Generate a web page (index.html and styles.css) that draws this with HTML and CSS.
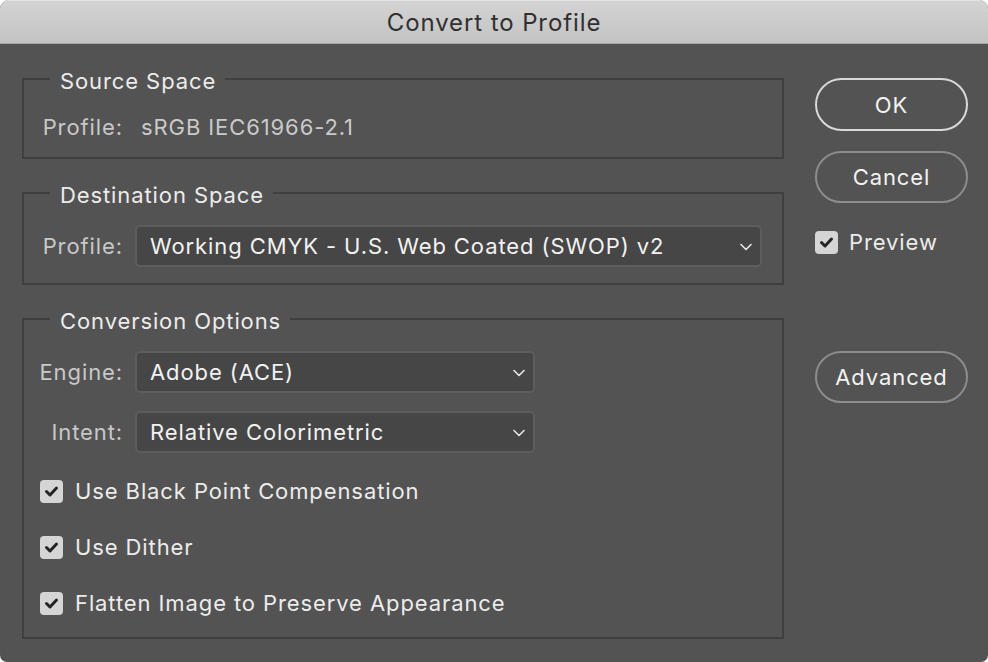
FILE: index.html
```html
<!DOCTYPE html>
<html>
<head>
<meta charset="utf-8">
<title>Convert to Profile</title>
<link rel="stylesheet" href="styles.css">
</head>
<body>
<div class="window">
  <header class="titlebar">Convert to Profile</header>
  <div class="content">
    <div class="main">
      <section class="group">
        <div class="group-head"><span class="legend">Source Space</span></div>
        <div class="group-body g1">
          <div class="row">
            <span class="label">Profile:</span>
            <span class="value">sRGB IEC61966-2.1</span>
          </div>
        </div>
      </section>

      <section class="group">
        <div class="group-head"><span class="legend">Destination Space</span></div>
        <div class="group-body g2">
          <div class="row">
            <span class="label">Profile:</span>
            <div class="select wide">
              <span>Working CMYK - U.S. Web Coated (SWOP) v2</span>
              <svg class="chev" width="12" height="8" viewBox="0 0 12 8"><path d="M1 1.5 L6 6.5 L11 1.5" fill="none" stroke="#e6e6e6" stroke-width="1.6" stroke-linecap="round" stroke-linejoin="round"/></svg>
            </div>
          </div>
        </div>
      </section>

      <section class="group">
        <div class="group-head"><span class="legend">Conversion Options</span></div>
        <div class="group-body g3">
          <div class="row">
            <span class="label">Engine:</span>
            <div class="select short">
              <span>Adobe (ACE)</span>
              <svg class="chev" width="12" height="8" viewBox="0 0 12 8"><path d="M1 1.5 L6 6.5 L11 1.5" fill="none" stroke="#e6e6e6" stroke-width="1.6" stroke-linecap="round" stroke-linejoin="round"/></svg>
            </div>
          </div>
          <div class="row intent">
            <span class="label">Intent:</span>
            <div class="select short">
              <span>Relative Colorimetric</span>
              <svg class="chev" width="12" height="8" viewBox="0 0 12 8"><path d="M1 1.5 L6 6.5 L11 1.5" fill="none" stroke="#e6e6e6" stroke-width="1.6" stroke-linecap="round" stroke-linejoin="round"/></svg>
            </div>
          </div>
          <div class="checks">
            <label class="check">
              <svg class="box" width="23" height="23" viewBox="0 0 23 23"><rect x="0" y="0" width="23" height="23" rx="4" fill="#d5d5d5"/><path d="M6.5 11.5 L10 15 L16.5 8" fill="none" stroke="#262626" stroke-width="3" stroke-linecap="round" stroke-linejoin="round"/></svg>
              <span>Use Black Point Compensation</span>
            </label>
            <label class="check">
              <svg class="box" width="23" height="23" viewBox="0 0 23 23"><rect x="0" y="0" width="23" height="23" rx="4" fill="#d5d5d5"/><path d="M6.5 11.5 L10 15 L16.5 8" fill="none" stroke="#262626" stroke-width="3" stroke-linecap="round" stroke-linejoin="round"/></svg>
              <span>Use Dither</span>
            </label>
            <label class="check">
              <svg class="box" width="23" height="23" viewBox="0 0 23 23"><rect x="0" y="0" width="23" height="23" rx="4" fill="#d5d5d5"/><path d="M6.5 11.5 L10 15 L16.5 8" fill="none" stroke="#262626" stroke-width="3" stroke-linecap="round" stroke-linejoin="round"/></svg>
              <span>Flatten Image to Preserve Appearance</span>
            </label>
          </div>
        </div>
      </section>
    </div>

    <aside class="side">
      <button class="btn default">OK</button>
      <button class="btn cancel">Cancel</button>
      <label class="check preview">
        <svg class="box" width="23" height="23" viewBox="0 0 23 23"><rect x="0" y="0" width="23" height="23" rx="4" fill="#d5d5d5"/><path d="M6.5 11.5 L10 15 L16.5 8" fill="none" stroke="#262626" stroke-width="3" stroke-linecap="round" stroke-linejoin="round"/></svg>
        <span>Preview</span>
      </label>
      <button class="btn advanced">Advanced</button>
    </aside>
  </div>
</div>
</body>
</html>
```

FILE: styles.css
```css
* { box-sizing: border-box; }

html, body {
  margin: 0;
  padding: 0;
  background: #ffffff;
}

body {
  font-family: Inter, "Noto Sans", "Liberation Sans", sans-serif;
  font-size: 22px;
  letter-spacing: 0.9px;
  color: #e8e8e8;
  width: 988px;
  height: 662px;
  overflow: hidden;
}

.window {
  width: 988px;
  height: 662px;
  background: #535353;
  border-radius: 9px 9px 7px 7px;
  overflow: hidden;
  display: flex;
  flex-direction: column;
}

.titlebar {
  height: 44px;
  flex: 0 0 44px;
  background: linear-gradient(#d4d4d4, #c3c3c3);
  border-bottom: 1px solid #a6a6a6;
  box-shadow: inset 0 1px 0 #e4e4e4;
  color: #303030;
  font-size: 24px;
  letter-spacing: 0.9px;
  line-height: 46px;
  text-align: center;
}

.content {
  display: flex;
  flex: 1;
  padding: 25px 0 0 22px;
}

.main {
  width: 762px;
  display: flex;
  flex-direction: column;
  gap: 24px;
}

.group-head {
  display: flex;
  height: 22px;
  align-items: center;
}

.group-head::before,
.group-head::after {
  content: "";
  height: 11px;
  align-self: flex-end;
  border-top: 2px solid #3f3f3f;
}

.group-head::before {
  flex: 0 0 26px;
  border-left: 2px solid #3f3f3f;
}

.group-head::after {
  flex: 1;
  border-right: 2px solid #3f3f3f;
}

.legend {
  padding: 0 9px 0 10px;
  color: #ececec;
  line-height: 22px;
  position: relative;
  top: 1px;
}

.group-body {
  border: 2px solid #3f3f3f;
  border-top: none;
}

.g1 { padding: 22px 20px 16px 0; }
.g2 { padding: 20px 20px 16px 0; }
.g3 { padding: 20px 20px 20px 0; }

.row {
  display: flex;
  align-items: center;
  min-height: 28px;
}

.intent { margin-top: 18px; }

.label {
  width: 99px;
  text-align: right;
  color: #c8c8c8;
  line-height: 28px;
  white-space: nowrap;
}

.value {
  margin-left: 18px;
  color: #cacaca;
  line-height: 28px;
}

.select {
  margin-left: 12px;
  height: 42px;
  background: #464646;
  border: 2px solid #5d5d5d;
  border-radius: 5px;
  display: flex;
  align-items: center;
  justify-content: space-between;
  padding: 0 8px 0 13px;
  color: #f2f2f2;
  white-space: nowrap;
}

.wide { width: 627px; }
.short { width: 400px; }

.chev { display: block; margin-top: 1px; }

.checks {
  margin-top: 24px;
  padding-left: 16px;
  display: flex;
  flex-direction: column;
  gap: 28px;
}

.check {
  display: flex;
  align-items: center;
  gap: 12px;
  height: 28px;
  color: #ececec;
  white-space: nowrap;
}

.box { display: block; flex: 0 0 23px; }

.side {
  margin-left: 31px;
  width: 153px;
  padding-top: 9px;
  display: flex;
  flex-direction: column;
}

.btn {
  font-family: inherit;
  font-size: 22px;
  letter-spacing: 0.9px;
  color: #f2f2f2;
  background: transparent;
  border: 2px solid #8c8c8c;
  border-radius: 27px;
  width: 153px;
  height: 52px;
  padding: 0;
}

.default {
  height: 53px;
  border-color: #d9d9d9;
}

.cancel { margin-top: 20px; }

.preview {
  margin-top: 25px;
  gap: 11px;
}

.advanced { margin-top: 95px; }
```
